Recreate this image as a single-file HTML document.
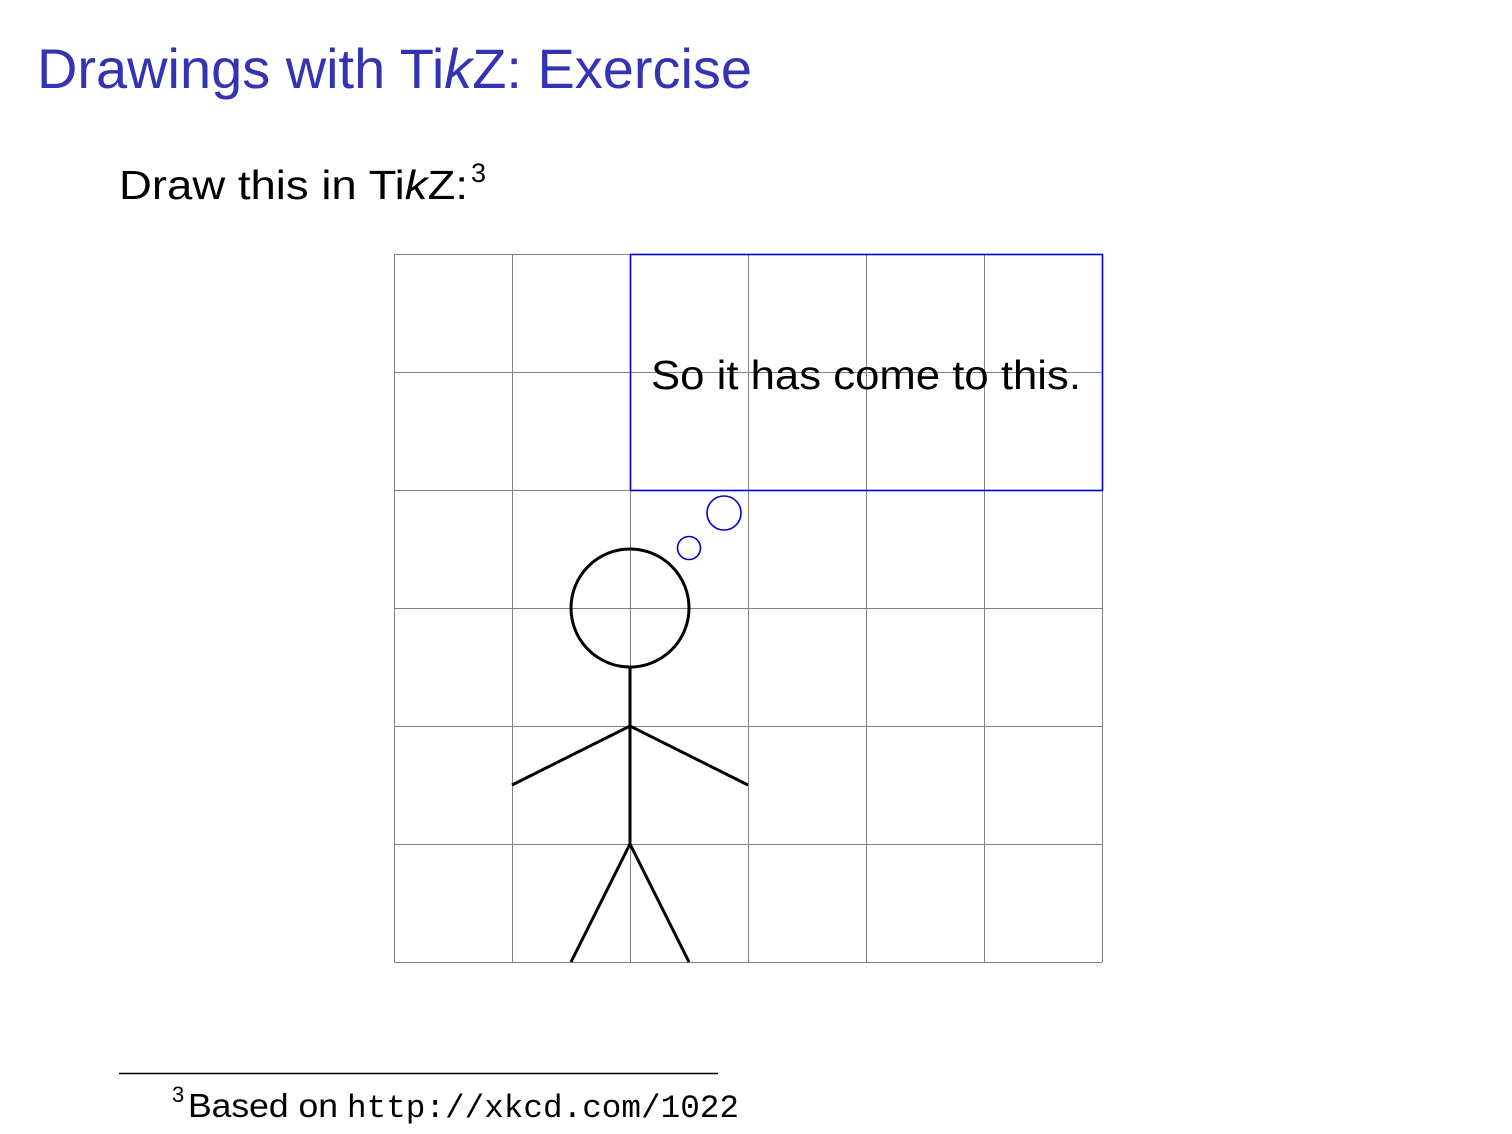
<!DOCTYPE html>
<html><head><meta charset="utf-8"><style>html,body{margin:0;padding:0;background:#fff;width:1512px;height:1134px;overflow:hidden}</style></head>
<body>
<svg width="1512" height="1134" viewBox="0 0 1512 1134" xmlns="http://www.w3.org/2000/svg" style="display:block">
<g font-family="Liberation Sans, DejaVu Sans, sans-serif">
<text x="37" y="88" font-size="56" fill="#3333b3" textLength="715" lengthAdjust="spacingAndGlyphs">Drawings with Ti<tspan font-style="italic">k</tspan>Z: Exercise</text>
<text x="119" y="199" font-size="41" fill="#000" textLength="349" lengthAdjust="spacingAndGlyphs">Draw this in Ti<tspan font-style="italic">k</tspan>Z:</text>
<text x="471" y="182" font-size="27" fill="#000">3</text>
</g>
<g stroke="#808080" stroke-width="1" fill="none">
<path d="M394.5 254V962M512.5 254V962M630.5 254V962M748.5 254V962M866.5 254V962M984.5 254V962M1102.5 254V962"/>
<path d="M394 254.5H1102M394 372.5H1102M394 490.5H1102M394 608.5H1102M394 726.5H1102M394 844.5H1102M394 962.5H1102"/>
</g>
<rect x="630.5" y="254.5" width="472" height="236" fill="none" stroke="#0000cc" stroke-width="1.6"/>
<circle cx="724" cy="513" r="17" fill="none" stroke="#0000cc" stroke-width="1.6"/>
<circle cx="689" cy="548" r="11.5" fill="none" stroke="#0000cc" stroke-width="1.6"/>
<text x="651" y="389" font-family="Liberation Sans, DejaVu Sans, sans-serif" font-size="41" fill="#000" textLength="430" lengthAdjust="spacingAndGlyphs">So it has come to this.</text>
<g stroke="#000" stroke-width="3" fill="none">
<circle cx="630" cy="608" r="59"/>
<path d="M630 667V844M512 785L630 726L748 785M571 962L630 844L689 962"/>
</g>
<line x1="119" y1="1073.5" x2="718" y2="1073.5" stroke="#000" stroke-width="1.5"/>
<text x="172" y="1102" font-family="Liberation Sans, sans-serif" font-size="22" fill="#000">3</text>
<text x="188" y="1117" font-family="Liberation Sans, sans-serif" font-size="33" fill="#000" textLength="150" lengthAdjust="spacingAndGlyphs">Based on</text>
<text x="347" y="1117" font-family="Liberation Mono, monospace" font-size="32" fill="#000" textLength="392" lengthAdjust="spacingAndGlyphs">http://xkcd.com/1022</text>
</svg>
</body></html>
